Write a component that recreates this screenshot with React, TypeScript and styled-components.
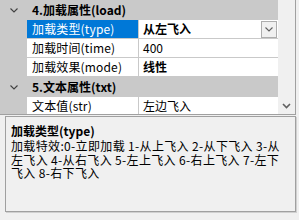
import React from 'react';
import styled, { createGlobalStyle } from 'styled-components';

const GlobalStyle = createGlobalStyle`
   html, body {
      margin: 0;
      padding: 0;
      background: #f0f0f0;
   }
   body {
      font-family: "Noto Sans CJK SC", "Noto Sans", sans-serif;
      font-size: 12px;
      color: #000;
   }
`;

type Prop = {
   name: string;
   value: string;
   bold?: boolean;
   selected?: boolean;
   dropdown?: boolean;
};

type Category = {
   title: string;
   props: Prop[];
};

const categories: Category[] = [
   {
      title: '4.加载属性(load)',
      props: [
         { name: '加载类型(type)', value: '从左飞入', bold: true, selected: true, dropdown: true },
         { name: '加载时间(time)', value: '400' },
         { name: '加载效果(mode)', value: '线性', bold: true },
      ],
   },
   {
      title: '5.文本属性(txt)',
      props: [{ name: '文本值(str)', value: '左边飞入' }],
   },
];

const descLines = [
   '加载特效:0-立即加载 1-从上飞入 2-从下飞入 3-从',
   '左飞入 4-从右飞入 5-左上飞入 6-右上飞入 7-左下',
   '飞入 8-右下飞入',
];

const Chevron = ({ color = '#404040' }: { color?: string }) => (
   <svg width="8" height="5" viewBox="0 0 8 5">
      <path d="M0.5 0.5 L4 4 L7.5 0.5" fill="none" stroke={color} strokeWidth="1.1" />
   </svg>
);

const App = () => {
   return (
      <Frame>
         <GlobalStyle />
         <GridArea>
            <Grid>
               {categories.map((cat) => (
                  <React.Fragment key={cat.title}>
                     <CategoryRow>
                        <Toggle>
                           <Chevron />
                        </Toggle>
                        <CategoryTitle>{cat.title}</CategoryTitle>
                     </CategoryRow>
                     {cat.props.map((p) => (
                        <PropRow key={p.name}>
                           <Gutter />
                           <NameCell selected={!!p.selected}>{p.name}</NameCell>
                           <ValueCell bold={!!p.bold}>
                              <span>{p.value}</span>
                              {p.dropdown && (
                                 <DropButton>
                                    <Chevron color="#606060" />
                                 </DropButton>
                              )}
                           </ValueCell>
                        </PropRow>
                     ))}
                  </React.Fragment>
               ))}
            </Grid>
            <ScrollBar>
               <ScrollArrow>
                  <svg width="9" height="6" viewBox="0 0 9 6">
                     <path d="M1 1 L4.5 4.5 L8 1" fill="none" stroke="#606060" strokeWidth="1.6" />
                  </svg>
               </ScrollArrow>
            </ScrollBar>
         </GridArea>
         <Description>
            <DescTitle>加载类型(type)</DescTitle>
            {descLines.map((line) => (
               <DescLine key={line}>{line}</DescLine>
            ))}
         </Description>
      </Frame>
   );
};

const Frame = styled.div`
   width: 299px;
   height: 220px;
   display: flex;
   flex-direction: column;
   overflow: hidden;
`;

const GridArea = styled.div`
   display: flex;
   width: 295px;
   height: 114px;
   border-right: 1px solid #a0a0a0;
   border-bottom: 1px solid #a0a0a0;
`;

const Grid = styled.div`
   width: 278px;
   height: 114px;
   overflow: hidden;
   background: #fff;
   display: flex;
   flex-direction: column;
`;

const CategoryRow = styled.div`
   flex: none;
   height: 20px;
   display: flex;
   align-items: center;
   background: #c9c9c9;
`;

const Toggle = styled.div`
   width: 27px;
   display: flex;
   justify-content: center;
   padding-top: 1px;
`;

const CategoryTitle = styled.div`
   padding-left: 5px;
   font-weight: 700;
   line-height: 20px;
`;

const PropRow = styled.div`
   flex: none;
   height: 19px;
   display: grid;
   grid-template-columns: 27px 112px 1fr;
`;

const Gutter = styled.div`
   background: #c9c9c9;
`;

const NameCell = styled.div<{ selected: boolean }>`
   padding-left: 5px;
   line-height: 18px;
   white-space: nowrap;
   letter-spacing: 0.15px;
   border-right: 1px solid #c9c9c9;
   border-bottom: 1px solid #c9c9c9;
   background: ${(p) => (p.selected ? '#0078d7' : '#fff')};
   color: ${(p) => (p.selected ? '#fff' : '#000')};
`;

const ValueCell = styled.div<{ bold: boolean }>`
   display: flex;
   align-items: flex-start;
   padding-left: 4px;
   line-height: 18px;
   white-space: nowrap;
   font-weight: ${(p) => (p.bold ? 700 : 400)};
   border-bottom: 1px solid #c9c9c9;
`;

const DropButton = styled.div`
   margin-left: auto;
   margin-right: 1px;
   margin-top: 1px;
   width: 14px;
   height: 15px;
   border: 1px solid #adadad;
   background: #f0f0f0;
   display: flex;
   align-items: center;
   justify-content: center;
`;

const ScrollBar = styled.div`
   flex: 1;
   background: #f0f0f0;
   display: flex;
   flex-direction: column;
   justify-content: flex-end;
`;

const ScrollArrow = styled.div`
   height: 17px;
   display: flex;
   align-items: center;
   justify-content: center;
`;

const Description = styled.div`
   margin: 1px 3px 0 5px;
   height: 96px;
   border: 1px solid #a0a0a0;
   box-shadow: 1px 1px 0 #d0d0d0;
   background: #f0f0f0;
   padding: 6px 0 0 5px;
   box-sizing: border-box;
   overflow: hidden;
`;

const DescTitle = styled.div`
   font-weight: 700;
   line-height: 15px;
   margin-bottom: 1px;
`;

const DescLine = styled.div`
   line-height: 13.5px;
   white-space: nowrap;
   letter-spacing: 0.35px;
`;

export default App;
